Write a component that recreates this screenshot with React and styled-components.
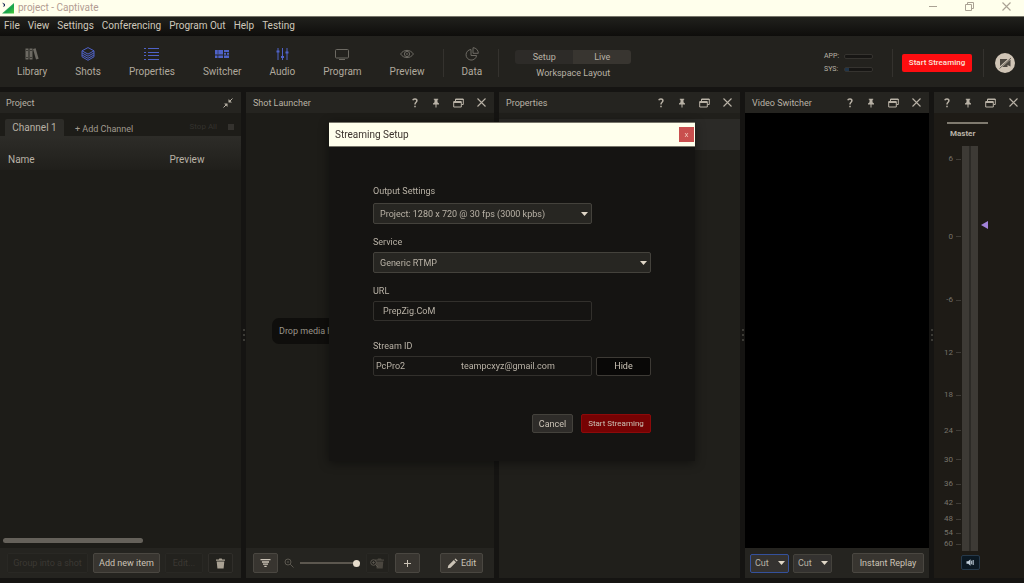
import styled, { createGlobalStyle } from 'styled-components'

const GlobalStyle = createGlobalStyle`
  * {
    box-sizing: border-box;
  }
  body {
    margin: 0;
    background: #151412;
    color: #b9b2a6;
    font-family: Roboto, 'Noto Sans', sans-serif;
    font-size: 10px;
    line-height: 14px;
    overflow: hidden;
  }
  button, input, select {
    font: inherit;
    color: inherit;
    margin: 0;
  }
  svg {
    display: block;
    flex-shrink: 0;
  }
`

const Window = styled.div`
  height: 100vh;
  display: flex;
  flex-direction: column;
`

const TitleBar = styled.header`
  height: 17px;
  flex-shrink: 0;
  display: flex;
  align-items: center;
  gap: 4px;
  padding: 0 13px 0 2px;
  background: #ffffec;
  border-bottom: 1px solid #77756a;
  color: #b39c92;
`

const WindowTitle = styled.h1`
  flex: 1;
  margin: 0;
  font-size: 10px;
  font-weight: 400;
`

const WindowControls = styled.div`
  display: flex;
  align-items: center;
  gap: 28px;
  padding-bottom: 3px;
  color: #aaa294;
`

const IconButton = styled.button`
  display: flex;
  padding: 0;
  border: 0;
  background: none;
`

const MenuBar = styled.nav`
  height: 19px;
  flex-shrink: 0;
  display: flex;
  align-items: center;
  gap: 8px;
  padding: 0 4px 2px;
  background: linear-gradient(#21211d, #0e0d0b);
`

const MenuItem = styled.button`
  padding: 0;
  border: 0;
  background: none;
  color: #cfc8bb;
`

const Toolbar = styled.div`
  height: 51px;
  flex-shrink: 0;
  display: flex;
  align-items: center;
  padding: 3px 9px 0 17px;
  background: #23221e;
`

const Tools = styled.div`
  display: flex;
  gap: 28px;
`

const Tool = styled.button`
  display: flex;
  flex-direction: column;
  align-items: center;
  gap: 4px;
  padding: 0;
  border: 0;
  background: none;
  color: #b0a99d;

  svg {
    color: ${({ $active }) => ($active ? '#4f62c8' : '#6d6a63')};
  }
`

const Divider = styled.div`
  width: 1px;
  height: 28px;
  margin: 0 ${({ $gap }) => $gap}px;
  background: #34322e;
`

const Workspace = styled.div`
  display: flex;
  flex-direction: column;
  align-items: center;
  gap: 2px;
  padding-top: 4px;
  font-size: 9px;
`

const Segments = styled.div`
  display: flex;
  border-radius: 3px;
  overflow: hidden;
`

const Segment = styled.button`
  width: 58px;
  height: 14px;
  padding: 0;
  border: 0;
  line-height: 14px;
  background: ${({ $active }) => ($active ? '#383530' : '#2d2b28')};
`

const Meters = styled.div`
  margin-left: auto;
  padding-right: 10px;
  display: flex;
  flex-direction: column;
  font-size: 7px;
  line-height: 13px;
`

const MeterRow = styled.div`
  display: grid;
  grid-template-columns: 20px 29px;
  align-items: center;
`

const MeterTrack = styled.div`
  height: 5px;
  border: 1px solid #35332f;
  border-radius: 2px;
  background: #171614;
`

const MeterFill = styled.div`
  height: 3px;
  background: #203448;
`

const LiveButton = styled.button`
  width: 70px;
  height: 18px;
  padding: 0;
  border: 0;
  border-radius: 2px;
  background: #fe0d10;
  color: #fbe3d8;
  font-size: 8px;
  line-height: 12px;
  font-weight: 500;
`

const RoundButton = styled.button`
  width: 20px;
  height: 20px;
  display: grid;
  place-items: center;
  padding: 0;
  border: 0;
  border-radius: 50%;
  background: #d0c5b6;
  color: #4c4740;
`

const Panels = styled.main`
  flex: 1;
  min-height: 0;
  display: flex;
  padding: 5px 0;
`

const Panel = styled.section`
  flex: ${({ $size }) => $size} 1 0;
  min-width: 0;
  display: flex;
  flex-direction: column;
  background: ${({ $bg }) => $bg || '#1d1c18'};
`

const Splitter = styled.div`
  width: 5px;
  flex-shrink: 0;
  display: flex;
  flex-direction: column;
  align-items: center;
  justify-content: center;
  gap: 3px;
`

const Grip = styled.span`
  width: 2px;
  height: 2px;
  border-radius: 1px;
  background: #4a4843;
`

const PanelHead = styled.header`
  height: 21px;
  flex-shrink: 0;
  display: flex;
  align-items: center;
  justify-content: space-between;
  padding: ${({ $pad }) => $pad || '0 8px 0 7px'};
  background: #252420;
  font-size: 9px;
`

const PanelTitle = styled.h2`
  margin: 0;
  font-size: 9px;
  font-weight: 400;
`

const PanelTools = styled.div`
  display: flex;
  align-items: center;
  gap: 13px;
  margin-left: auto;
`

const Tabs = styled.div`
  height: 24px;
  flex-shrink: 0;
  display: flex;
  align-items: flex-end;
  padding: 0 7px 0 5px;
  border-bottom: 1px solid #2d2c28;
`

const Tab = styled.button`
  height: 17px;
  width: 59px;
  padding: 0;
  border: 0;
  border-radius: 2px 2px 0 0;
  background: #2d2c28;
`

const AddChannel = styled.button`
  flex: 1;
  padding: 0 11px;
  border: 0;
  background: none;
  text-align: left;
  font-size: 9px;
  color: #a09a8f;
`

const StopAll = styled.button`
  display: flex;
  align-items: center;
  gap: 11px;
  padding: 0 0 2px;
  border: 0;
  background: none;
  font-size: 8px;
  color: #34322e;

  &::after {
    content: '';
    width: 6px;
    height: 6px;
    background: #34322e;
  }
`

const ItemTable = styled.table`
  width: 100%;
  border-collapse: collapse;
  background: linear-gradient(#2d2c28, #201f1b);

  th {
    height: 33px;
    padding: 12px 8px 0;
    font-weight: 400;
    text-align: left;
  }
  th:first-child {
    width: 67%;
  }
`

const Fill = styled.div`
  flex: 1;
  min-height: 0;
  display: flex;
  flex-direction: column;
  justify-content: ${({ $align }) => $align || 'center'};
  background: ${({ $bg }) => $bg || 'transparent'};
`

const ScrollThumb = styled.div`
  width: 58%;
  height: 5px;
  margin: 0 3px 5px;
  border-radius: 3px;
  background: #65615a;
`

const DropHint = styled.p`
  align-self: center;
  margin: 0;
  padding: 6px 7px;
  border-radius: 7px;
  background: #0f0e0c;
  font-size: 9px;
  color: #9a9489;
  width: 196px;
  text-align: left;
`

const PropertyStrip = styled.div`
  height: 31px;
  margin-top: 6px;
  background: #2b2a27;
`

const PanelFoot = styled.footer`
  height: 30px;
  flex-shrink: 0;
  display: flex;
  align-items: center;
  gap: ${({ $gap }) => $gap || 4}px;
  padding: ${({ $pad }) => $pad || '0 7px'};
  background: #252420;
`

const FootButton = styled.button`
  height: 20px;
  width: ${({ $w }) => $w}px;
  display: flex;
  align-items: center;
  justify-content: center;
  gap: 3px;
  padding: 0;
  flex-shrink: 0;
  border: 1px solid ${({ $faint }) => ($faint ? '#292824' : '#4a4741')};
  border-radius: 2px;
  background: ${({ $faint }) => ($faint ? '#23221e' : '#383530')};
  color: ${({ $faint }) => ($faint ? '#3b3833' : '#cbc3b6')};
  font-size: 9px;
  white-space: nowrap;
  margin-left: ${({ $push }) => $push || 0};
`

const TrashButton = styled(FootButton)`
  border-color: #302e2a;
  background: #23221e;
  color: #aaa294;
`

const ZoomSlider = styled.input`
  appearance: none;
  flex: 1;
  min-width: 0;
  height: 8px;
  background: linear-gradient(#5c574f, #5c574f) center / 100% 2px no-repeat;

  &::-webkit-slider-thumb {
    appearance: none;
    width: 7px;
    height: 7px;
    border-radius: 50%;
    background: #e6dccb;
  }
`

const SelectBox = styled.div`
  display: grid;
  width: ${({ $w }) => $w};
  flex-shrink: 0;

  select {
    grid-area: 1 / 1;
    width: 100%;
    height: ${({ $h }) => $h}px;
    appearance: none;
    padding: 0 ${({ $pad }) => $pad}px;
    border: 1px solid ${({ $focus }) => ($focus ? '#34519c' : '#44423c')};
    border-radius: 2px;
    background: ${({ $bg }) => $bg};
    font-size: 9px;
    line-height: 16px;
  }
  svg {
    grid-area: 1 / 1;
    place-self: center end;
    margin-right: 4px;
    pointer-events: none;
    color: #e0d7c8;
  }
`

const Mixer = styled.div`
  flex: 1;
  min-height: 0;
  display: flex;
  flex-direction: column;
  padding: 9px 36px 8px 13px;
`

const ChannelName = styled.h3`
  width: 41px;
  margin: 0;
  padding: 3px 0 0 3px;
  border-top: 2px solid #7f7a6f;
  font-size: 8px;
  line-height: 14px;
  font-weight: 700;
`

const LevelRow = styled.div`
  flex: 1;
  min-height: 0;
  display: flex;
  margin: 5px 0 4px;
`

const Scale = styled.ol`
  position: relative;
  width: 16px;
  margin: 0;
  padding: 0;
  list-style: none;
`

/* marks sit at their level on the scale */
const Mark = styled.li`
  position: absolute;
  right: 1px;
  display: flex;
  align-items: center;
  gap: 3px;
  height: 10px;
  margin-top: -5px;
  font-size: 8px;
  line-height: 10px;
  color: #77736a;

  &::after {
    content: '';
    width: 5px;
    height: 1px;
    background: #3e3b36;
  }
`

const LevelBars = styled.div`
  display: flex;
  gap: 2px;
  background: #2c2a26;
`

const LevelBar = styled.div`
  width: 7px;
  background: #3d3a35;
`

const FaderMark = styled.div`
  margin: 75px 0 0 3px;
  color: #a283d8;
`

const SpeakerButton = styled.button`
  width: 19px;
  height: 15px;
  margin-left: 14px;
  display: grid;
  place-items: center;
  padding: 0;
  border: 1px solid #26394a;
  border-radius: 2px;
  background: #0b1822;
  color: #c3d0dc;
`

const Overlay = styled.div`
  position: fixed;
  inset: 0;
  display: grid;
  place-items: center;
`

const Dialog = styled.form`
  width: 366px;
  background: #151412;
  box-shadow: 0 2px 10px rgba(0, 0, 0, 0.45);
`

const DialogHead = styled.header`
  height: 25px;
  display: flex;
  align-items: center;
  justify-content: space-between;
  padding: 0 1px 0 6px;
  border: solid #77756a;
  border-width: 1px 0;
  background: #ffffec;
`

const DialogTitle = styled.h2`
  margin: 0;
  font-size: 10px;
  font-weight: 400;
  color: #3b322c;
`

const CloseButton = styled.button`
  width: 15px;
  height: 15px;
  padding: 0;
  border: 0;
  background: #c94f4e;
  color: #f2c9bd;
  font-size: 8px;
  line-height: 12px;
`

const DialogBody = styled.div`
  display: flex;
  flex-direction: column;
  gap: 11px;
  padding: 37px 44px 28px;
`

const Field = styled.div`
  display: flex;
  flex-direction: column;
  gap: ${({ $gap }) => $gap || 3}px;
  margin-bottom: ${({ $after }) => $after || 0}px;

  label {
    font-size: 9px;
  }
`

const FieldRow = styled.div`
  display: flex;
  align-items: center;
  justify-content: space-between;
`

const TextInput = styled.input`
  width: 219px;
  height: 20px;
  padding: 0 ${({ $pad }) => $pad}px;
  border: 1px solid #32302c;
  border-radius: 2px;
  background: #151412;
  font-size: 9px;
  white-space: pre;
`

const DialogButton = styled.button`
  width: ${({ $w }) => $w}px;
  height: 19px;
  padding: 0;
  border: 1px solid ${({ $line }) => $line};
  border-radius: 2px;
  background: ${({ $bg }) => $bg};
  color: #cbc3b6;
  font-size: ${({ $small }) => ($small ? 8 : 9)}px;
`

const Actions = styled.div`
  display: flex;
  justify-content: flex-end;
  gap: 8px;
  padding-top: 27px;
`

const LogoIcon = () => (
  <svg width="12" height="12" viewBox="0 0 12 12">
    <defs>
      <linearGradient id="logo" x1="0" y1="0" x2="1" y2="1">
        <stop offset="0" stopColor="#9fe6a4" />
        <stop offset="0.6" stopColor="#17a24a" />
        <stop offset="1" stopColor="#4ccf3d" />
      </linearGradient>
    </defs>
    <path d="M12 1v10.500H0z" fill="url(#logo)" />
    <path d="M0 .5 3 2v2L1 5l1-2z" fill="#1c2b55" />
  </svg>
)

const MinimizeIcon = () => (
  <svg width="8" height="9" viewBox="0 0 8 9" stroke="currentColor">
    <path d="M0 4.500h8" />
  </svg>
)

const RestoreIcon = () => (
  <svg width="9" height="9" viewBox="0 0 9 9" fill="none" stroke="currentColor">
    <path d="M.5 2.500h6v6h-6zM2.500 2.500v-2h6v6h-2" />
  </svg>
)

const CrossIcon = () => (
  <svg width="9" height="9" viewBox="0 0 9 9" stroke="currentColor" strokeWidth="1.100">
    <path d="M.5.5l8 8M8.500.5l-8 8" />
  </svg>
)

const LibraryIcon = () => (
  <svg width="14" height="14" viewBox="0 0 14 14" fill="currentColor">
    <path d="M.5 1.500h3v11h-3zM4.500 1.500h3v11h-3z" />
    <path d="M8 2l2.600-.7 3 10.500-2.600.8z" />
    <path d="M1.200 3.500h1.600M5.200 3.500h1.600M1.200 10.500h1.600M5.200 10.500h1.600" stroke="#23221e" strokeWidth=".8" />
  </svg>
)

const ShotsIcon = () => (
  <svg width="14" height="14" viewBox="0 0 14 14" fill="none" stroke="currentColor" strokeLinejoin="round">
    <path d="M7 .6l6 3.200-6 3.300-6-3.300z" />
    <path d="M1 3.800v6L7 13.300l6-3.500v-6M1 5.900l6 3.300 6-3.300M1 8l6 3.300L13 8" />
  </svg>
)

const ListIcon = () => (
  <svg width="15" height="14" viewBox="0 0 15 14" stroke="currentColor">
    <path d="M0 1.500h2M4 1.500h11M0 5.500h2M4 5.500h11M0 8.500h2M4 8.500h11M0 12.500h2M4 12.500h11" />
  </svg>
)

const SwitcherIcon = () => (
  <svg width="14" height="14" viewBox="0 0 14 14" fill="currentColor">
    <path d="M0 3h8v4.500H0zM9 3h5v2H9zM9 5.800h2v2H9zM12 5.800h2v2h-2zM0 8.500h2.500v2.500H0zM3.300 8.500h4.700v2.500H3.300zM9 8.500h5v2.500H9z" />
    <path d="M3 3v4.500" stroke="#23221e" strokeWidth=".5" />
  </svg>
)

const AudioIcon = () => (
  <svg width="13" height="14" viewBox="0 0 13 14" stroke="currentColor">
    <path d="M2 1v12M6.500 1v12M11 1v12" />
    <path d="M.5 4.500h3M5 10h3M9.500 5.500h3" strokeWidth="2" />
  </svg>
)

const ProgramIcon = () => (
  <svg width="14" height="14" viewBox="0 0 14 14" fill="none" stroke="currentColor">
    <rect x=".5" y="2.500" width="13" height="8.500" rx="1" />
    <path d="M4 12.500h6" />
  </svg>
)

const EyeIcon = () => (
  <svg width="14" height="14" viewBox="0 0 14 14" fill="none" stroke="currentColor">
    <path d="M.6 7C3.500 2.200 10.500 2.200 13.400 7 10.500 11.800 3.500 11.800.6 7z" />
    <circle cx="7" cy="7" r="2.600" />
    <circle cx="7" cy="7" r=".5" />
  </svg>
)

const DataIcon = () => (
  <svg width="14" height="14" viewBox="0 0 14 14" fill="none" stroke="currentColor">
    <path d="M6 2.500A5.300 5.300 0 1 0 11.600 8.500H6z" />
    <path d="M8 .7v5.600h5.300A5.400 5.400 0 0 0 8 .7z" />
  </svg>
)

const CameraOffIcon = () => (
  <svg width="14" height="12" viewBox="0 0 14 12" fill="currentColor">
    <path d="M2 2h7.500v2.300L12.500 2.500v7L9.500 8v2H2z" />
    <path d="M1 11.500L13 .5" stroke="#d0c5b6" strokeWidth="2.200" />
    <path d="M1.500 11.500L13 1" stroke="currentColor" strokeWidth=".8" />
  </svg>
)

const HelpIcon = () => (
  <svg width="8" height="10" viewBox="0 0 8 10" fill="none" stroke="currentColor" strokeWidth="1.500">
    <path d="M1.800 2.300C2.300.4 6 .5 5.900 2.800 5.800 4.300 4 4.300 4 6.400M4 7.700v1.500" />
  </svg>
)

const PinIcon = () => (
  <svg width="8" height="10" viewBox="0 0 8 10" fill="currentColor">
    <path d="M1.800.8h4.400v1H5.500v2.400L7 5.500v1H4.500v3h-1v-3H1v-1l1.500-1.300V1.800h-.7z" />
  </svg>
)

const FloatIcon = () => (
  <svg width="11" height="10" viewBox="0 0 11 10" fill="none" stroke="currentColor">
    <path d="M.7 3.500h7.600v5.500H.7zM2.500 3V1h7.800v5.500H8.500" />
    <path d="M.7 4.500h7.600M2.500 1.500h7.800" />
  </svg>
)

const CollapseIcon = () => (
  <svg width="10" height="10" viewBox="0 0 10 10" fill="currentColor" stroke="currentColor">
    <path d="M.5 9.500l3-3M9.500.5l-3 3" />
    <path d="M1.500 5.700h2.800v2.800zM5.700 1.500v2.800h2.800z" strokeWidth=".4" />
  </svg>
)

const CaretIcon = () => (
  <svg width="7" height="4" viewBox="0 0 7 4" fill="currentColor">
    <path d="M0 0h7L3.500 4z" />
  </svg>
)

const TrashIcon = () => (
  <svg width="11" height="11" viewBox="0 0 11 11" fill="currentColor">
    <path d="M1 1.500h2.800L4.300.5h2.400l.5 1H10v1.300H1zM1.700 3.500h7.600l-.7 7H2.400z" />
  </svg>
)

const RemoveShotIcon = () => (
  <svg width="15" height="11" viewBox="0 0 15 11" fill="none">
    <path d="M5 1.500h2.300L8 .5h3l.7 1H14v1.300H5zM6 3.500h7.300l-.6 7H6.600z" fill="#4a463f" />
    <circle cx="3.500" cy="4.500" r="2.800" stroke="#5b574f" />
    <path d="M5.600 6.600l2.600 2.600M2.300 4.500h2.400M3.500 3.300v2.400" stroke="#5b574f" />
  </svg>
)

const FilterIcon = () => (
  <svg width="11" height="10" viewBox="0 0 11 10" stroke="currentColor" strokeWidth="1.300">
    <path d="M.5 1.700h10M2 4h7M3 6.200h5M4.300 8.400h2.400" />
  </svg>
)

const MagnifierIcon = () => (
  <svg width="10" height="10" viewBox="0 0 10 10" fill="none" stroke="#5b574f">
    <circle cx="4" cy="4" r="3" />
    <path d="M6.200 6.200L9.500 9.500M3 4h2" />
  </svg>
)

const PlusIcon = () => (
  <svg width="9" height="9" viewBox="0 0 9 9" stroke="currentColor">
    <path d="M4.500 1v7M1 4.500h7" />
  </svg>
)

const PencilIcon = () => (
  <svg width="11" height="11" viewBox="0 0 11 11" fill="currentColor">
    <path d="M.7 10.300l.6-2.800 5.500-5.500 2.200 2.200-5.500 5.500zM7.500 1.300l1-.9 2.200 2.200-1 .9z" />
  </svg>
)

const SpeakerIcon = () => (
  <svg width="9" height="7" viewBox="0 0 9 7" fill="currentColor">
    <path d="M.5 2.300h1.700L4.500.3v6.400L2.200 4.700H.5z" />
    <path d="M5.700 1.700v3.600M7.200 1v5" stroke="currentColor" />
  </svg>
)

const FaderIcon = () => (
  <svg width="7" height="8" viewBox="0 0 7 8" fill="currentColor">
    <path d="M7 0v8L0 4z" />
  </svg>
)

const menus = ['File', 'View', 'Settings', 'Conferencing', 'Program Out', 'Help', 'Testing']

const tools = [
  { label: 'Library', icon: LibraryIcon },
  { label: 'Shots', icon: ShotsIcon, active: true },
  { label: 'Properties', icon: ListIcon, active: true },
  { label: 'Switcher', icon: SwitcherIcon, active: true },
  { label: 'Audio', icon: AudioIcon, active: true },
  { label: 'Program', icon: ProgramIcon },
  { label: 'Preview', icon: EyeIcon }
]

const levels = [
  { label: '6', at: 3.3 },
  { label: '0', at: 22.4 },
  { label: '-6', at: 38.1 },
  { label: '12', at: 51 },
  { label: '18', at: 61.5 },
  { label: '24', at: 70.3 },
  { label: '30', at: 77.5 },
  { label: '36', at: 83.5 },
  { label: '42', at: 88.2 },
  { label: '48', at: 92.2 },
  { label: '54', at: 95.6 },
  { label: '60', at: 98.3 }
]

function PanelButtons () {
  return (
    <PanelTools>
      <IconButton aria-label='Help'><HelpIcon /></IconButton>
      <IconButton aria-label='Pin'><PinIcon /></IconButton>
      <IconButton aria-label='Float'><FloatIcon /></IconButton>
      <IconButton aria-label='Close'><CrossIcon /></IconButton>
    </PanelTools>
  )
}

function PanelSplitter () {
  return (
    <Splitter>
      <Grip />
      <Grip />
      <Grip />
    </Splitter>
  )
}

function Select ({ id, label, value, ...box }) {
  return (
    <SelectBox {...box}>
      <select id={id} aria-label={label} defaultValue={value}>
        <option>{value}</option>
      </select>
      <CaretIcon />
    </SelectBox>
  )
}

function TopToolbar () {
  return (
    <Toolbar>
      <Tools>
        {tools.map(({ label, icon: Icon, active }) => (
          <Tool key={label} $active={active}>
            <Icon />
            {label}
          </Tool>
        ))}
      </Tools>
      <Divider $gap={18} />
      <Tool>
        <DataIcon />
        Data
      </Tool>
      <Divider $gap={16} />
      <Workspace>
        <Segments>
          <Segment>Setup</Segment>
          <Segment $active>Live</Segment>
        </Segments>
        Workspace Layout
      </Workspace>
      <Meters>
        <MeterRow>
          APP:
          <MeterTrack />
        </MeterRow>
        <MeterRow>
          SYS:
          <MeterTrack>
            <MeterFill style={{ width: '14%' }} />
          </MeterTrack>
        </MeterRow>
      </Meters>
      <Divider $gap={9} />
      <LiveButton>Start Streaming</LiveButton>
      <Divider $gap={11} />
      <RoundButton aria-label='Camera off'><CameraOffIcon /></RoundButton>
    </Toolbar>
  )
}

function ProjectPanel () {
  return (
    <Panel $size={241}>
      <PanelHead $pad='0 8px 0 6px'>
        <PanelTitle>Project</PanelTitle>
        <IconButton aria-label='Collapse'><CollapseIcon /></IconButton>
      </PanelHead>
      <Tabs>
        <Tab>Channel 1</Tab>
        <AddChannel>+ Add Channel</AddChannel>
        <StopAll>Stop All</StopAll>
      </Tabs>
      <ItemTable>
        <thead>
          <tr>
            <th>Name</th>
            <th>Preview</th>
          </tr>
        </thead>
      </ItemTable>
      <Fill $align='flex-end'>
        <ScrollThumb />
      </Fill>
      <PanelFoot $gap={5}>
        <FootButton $w={81} $faint>Group into a shot</FootButton>
        <FootButton $w={67}>Add new item</FootButton>
        <FootButton $w={38} $faint>Edit...</FootButton>
        <TrashButton $w={25} aria-label='Delete'><TrashIcon /></TrashButton>
      </PanelFoot>
    </Panel>
  )
}

function ShotPanel () {
  return (
    <Panel $size={248}>
      <PanelHead>
        <PanelTitle>Shot Launcher</PanelTitle>
        <PanelButtons />
      </PanelHead>
      <Fill>
        <DropHint>Drop media here to create new shots</DropHint>
      </Fill>
      <PanelFoot $gap={6} $pad='0 11px 0 7px'>
        <FootButton $w={25} aria-label='Filter'><FilterIcon /></FootButton>
        <MagnifierIcon />
        <ZoomSlider type='range' aria-label='Thumbnail size' defaultValue={100} />
        <FootButton $w={23} $faint aria-label='Remove shot'><RemoveShotIcon /></FootButton>
        <FootButton $w={25} aria-label='Add shot'><PlusIcon /></FootButton>
        <FootButton $w={43} $push='14px'>
          <PencilIcon />
          Edit
        </FootButton>
      </PanelFoot>
    </Panel>
  )
}

function SwitcherPanel () {
  return (
    <Panel $size={184}>
      <PanelHead>
        <PanelTitle>Video Switcher</PanelTitle>
        <PanelButtons />
      </PanelHead>
      <Fill $bg='#000' />
      <PanelFoot $pad='0 5px'>
        <Select label='Transition' value='Cut' $w='39px' $h={19} $pad={4} $bg='#343230' $focus />
        <Select label='Second transition' value='Cut' $w='39px' $h={19} $pad={4} $bg='#343230' />
        <FootButton $w={72} $push='auto'>Instant Replay</FootButton>
      </PanelFoot>
    </Panel>
  )
}

function AudioPanel () {
  return (
    <Panel $size={90} $bg='#1e1b16'>
      <PanelHead $pad='0 6px'>
        <PanelButtons />
      </PanelHead>
      <Mixer>
        <ChannelName>Master</ChannelName>
        <LevelRow>
          <Scale>
            {levels.map(({ label, at }) => (
              <Mark key={label} style={{ top: `${at}%` }}>{label}</Mark>
            ))}
          </Scale>
          <LevelBars>
            <LevelBar />
            <LevelBar />
          </LevelBars>
          <FaderMark><FaderIcon /></FaderMark>
        </LevelRow>
        <SpeakerButton aria-label='Mute'><SpeakerIcon /></SpeakerButton>
      </Mixer>
    </Panel>
  )
}

function StreamingSetup () {
  return (
    <Overlay>
      <Dialog role='dialog' aria-labelledby='setup-title' onSubmit={(e) => e.preventDefault()}>
        <DialogHead>
          <DialogTitle id='setup-title'>Streaming Setup</DialogTitle>
          <CloseButton type='button' aria-label='Close'>x</CloseButton>
        </DialogHead>
        <DialogBody>
          <Field $gap={5}>
            <label htmlFor='output'>Output Settings</label>
            <Select id='output' value='Project: 1280 x 720 @ 30 fps (3000 kpbs)' $w='219px' $h={21} $pad={6} $bg='#272622' />
          </Field>
          <Field>
            <label htmlFor='service'>Service</label>
            <Select id='service' value='Generic RTMP' $w='100%' $h={21} $pad={6} $bg='#272622' />
          </Field>
          <Field $after={7}>
            <label htmlFor='url'>URL</label>
            <TextInput id='url' $pad={9} defaultValue='PrepZig.CoM' />
          </Field>
          <Field>
            <label htmlFor='stream-id'>Stream ID</label>
            <FieldRow>
              <TextInput id='stream-id' $pad={2} defaultValue={'PcPro2' + ' '.repeat(25) + 'teampcxyz@gmail.com'} />
              <DialogButton type='button' $w={55} $bg='#090807' $line='#3d3a35'>Hide</DialogButton>
            </FieldRow>
          </Field>
          <Actions>
            <DialogButton type='button' $w={41} $bg='#2e2c29' $line='#44423c'>Cancel</DialogButton>
            <DialogButton $w={70} $bg='#760203' $line='#8c0a0a' $small>Start Streaming</DialogButton>
          </Actions>
        </DialogBody>
      </Dialog>
    </Overlay>
  )
}

function App () {
  return (
    <Window>
      <GlobalStyle />
      <TitleBar>
        <LogoIcon />
        <WindowTitle>project - Captivate</WindowTitle>
        <WindowControls>
          <IconButton aria-label='Minimize'><MinimizeIcon /></IconButton>
          <IconButton aria-label='Restore'><RestoreIcon /></IconButton>
          <IconButton aria-label='Close'><CrossIcon /></IconButton>
        </WindowControls>
      </TitleBar>
      <MenuBar>
        {menus.map((menu) => (
          <MenuItem key={menu}>{menu}</MenuItem>
        ))}
      </MenuBar>
      <TopToolbar />
      <Panels>
        <ProjectPanel />
        <PanelSplitter />
        <ShotPanel />
        <PanelSplitter />
        <Panel $size={241} $bg='#201f1b'>
          <PanelHead>
            <PanelTitle>Properties</PanelTitle>
            <PanelButtons />
          </PanelHead>
          <PropertyStrip />
        </Panel>
        <PanelSplitter />
        <SwitcherPanel />
        <PanelSplitter />
        <AudioPanel />
      </Panels>
      <StreamingSetup />
    </Window>
  )
}

export default App
